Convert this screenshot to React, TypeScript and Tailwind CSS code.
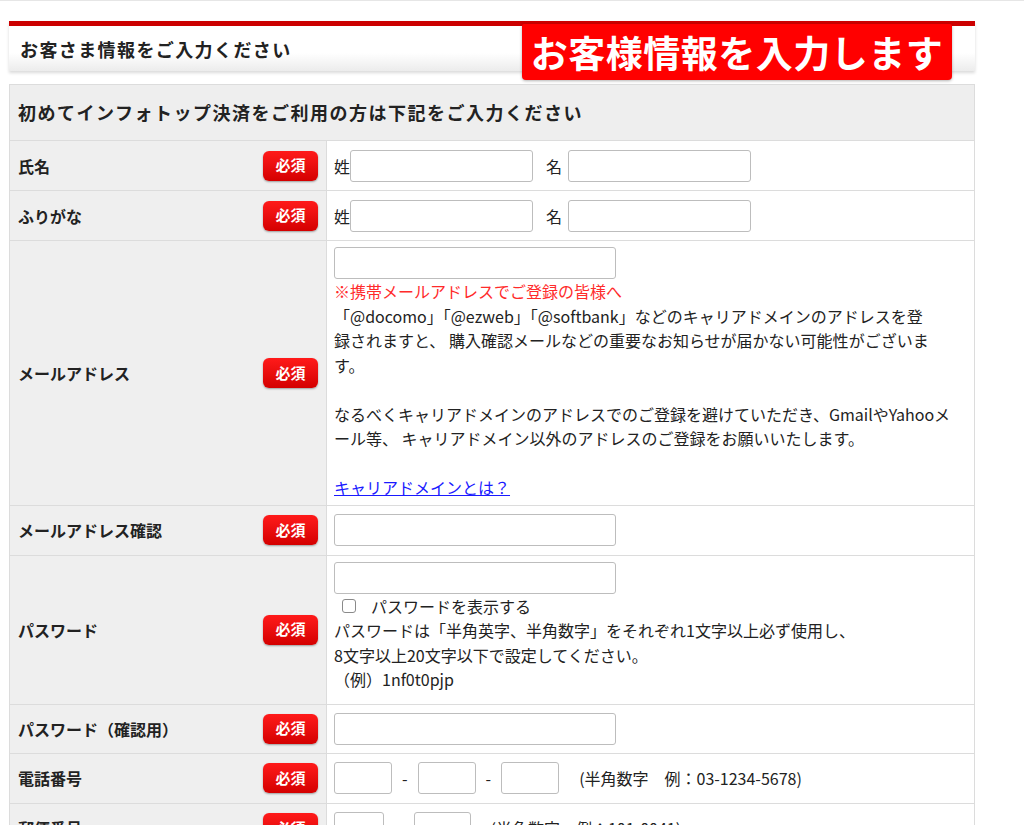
import React from 'react';

const FONT = { fontFamily: '"Noto Sans CJK JP", "Noto Sans", sans-serif' };

function Required() {
  return (
    <span className="inline-flex items-center justify-center w-[55px] h-[30px] rounded-[6px] bg-gradient-to-b from-[#ff1a1a] to-[#d40000] text-white text-[15px] font-bold shadow-[0_1px_2px_rgba(0,0,0,0.35)]">
      必須
    </span>
  );
}

function Field({ w = 'w-[282px]' }: { w?: string }) {
  return <input type="text" className={`${w} h-[32px] border border-[#bdbdbd] rounded-[3px] bg-white`} />;
}

function Row({ label, children, tall = false, h = 'h-[49px]' }: { label: string; children: React.ReactNode; tall?: boolean; h?: string }) {
  return (
    <tr className="border-t border-[#dcdcdc]">
      <td className="bg-[#efefef] w-[317px] pl-[8px] pr-[8px] border-r border-[#dcdcdc] align-middle">
        <div className={`flex items-center justify-between ${tall ? '' : h}`}>
          <span className="text-[16px] font-bold text-[#222]">{label}</span>
          <Required />
        </div>
      </td>
      <td className="pl-[7px] align-middle bg-white">{children}</td>
    </tr>
  );
}

export default function App() {
  return (
    <div className="min-h-[825px] bg-white border-t border-[#e6e6e6] text-[#222]" style={FONT}>
      <div className="relative w-[966px] ml-[9px] pt-[20px]">
        {/* Section heading */}
        <div className="border-t-[5px] border-[#cc0000] bg-gradient-to-b from-white from-60% to-[#ececec] shadow-[0_2px_3px_rgba(0,0,0,0.15)] h-[50px] flex items-center pl-[11px]">
          <h1 className="text-[18px] font-bold leading-none tracking-[1.4px]">お客さま情報をご入力ください</h1>
        </div>

        {/* Annotation label */}
        <div className="absolute left-[513px] top-[23px] w-[430px] h-[56px] bg-[#ff0000] rounded-b-[4px] rounded-t-[2px] shadow-[0_1px_3px_rgba(0,0,0,0.3)] flex items-center justify-center">
          <span className="text-white text-[37px] font-bold leading-none tracking-[0.5px]">お客様情報を入力します</span>
        </div>

        <table className="mt-[13px] w-full border border-[#dcdcdc] border-collapse">
          <tbody>
            <tr>
              <td colSpan={2} className="bg-[#eeeeee] h-[56px] pl-[8px] align-middle">
                <span className="text-[18px] font-bold tracking-[1.5px]">初めてインフォトップ決済をご利用の方は下記をご入力ください</span>
              </td>
            </tr>

            <Row label="氏名">
              <div className="flex items-center text-[16px]">
                <span>姓</span>
                <Field w="w-[183px]" />
                <span className="ml-[13px] mr-[6px]">名</span>
                <Field w="w-[183px]" />
              </div>
            </Row>

            <Row label="ふりがな">
              <div className="flex items-center text-[16px]">
                <span>姓</span>
                <Field w="w-[183px]" />
                <span className="ml-[13px] mr-[6px]">名</span>
                <Field w="w-[183px]" />
              </div>
            </Row>

            <Row label="メールアドレス" tall>
              <div className="pt-[6px] pb-[5px] text-[16px] leading-[24.5px]">
                <Field />
                <p className="text-[#ff2b2b]">※携帯メールアドレスでご登録の皆様へ</p>
                <p>
                  「@docomo」「@ezweb」「@softbank」などのキャリアドメインのアドレスを登
                  <br />
                  録されますと、 購入確認メールなどの重要なお知らせが届かない可能性がございま
                  <br />
                  す。
                </p>
                <p>&nbsp;</p>
                <p>
                  なるべくキャリアドメインのアドレスでのご登録を避けていただき、GmailやYahooメ
                  <br />
                  ール等、 キャリアドメイン以外のアドレスのご登録をお願いいたします。
                </p>
                <p>&nbsp;</p>
                <a href="#" className="text-[#1a1aff] underline">キャリアドメインとは？</a>
              </div>
            </Row>

            <Row label="メールアドレス確認">
              <Field />
            </Row>

            <Row label="パスワード" tall>
              <div className="pt-[6px] pb-[12px] text-[16px] leading-[24.5px]">
                <Field />
                <label className="flex items-center">
                  <span className="ml-[8px] w-[14px] h-[14px] border border-[#8a8a8a] rounded-[3px] bg-white" />
                  <span className="ml-[15px]">パスワードを表示する</span>
                </label>
                <p>パスワードは「半角英字、半角数字」をそれぞれ1文字以上必ず使用し、</p>
                <p>8文字以上20文字以下で設定してください。</p>
                <p>（例）1nf0t0pjp</p>
              </div>
            </Row>

            <Row label="パスワード（確認用）" h="h-[48px]">
              <Field />
            </Row>

            <Row label="電話番号">
              <div className="flex items-center text-[16px]">
                <Field w="w-[58px]" />
                <span className="mx-[10px]">-</span>
                <Field w="w-[58px]" />
                <span className="mx-[10px]">-</span>
                <Field w="w-[58px]" />
                <span className="ml-[20px]">(半角数字　例：03-1234-5678)</span>
              </div>
            </Row>

            <Row label="郵便番号">
              <div className="flex items-center text-[16px]">
                <Field w="w-[50px]" />
                <span className="mx-[12px]">-</span>
                <Field w="w-[57px]" />
                <span className="ml-[20px]">(半角数字　例：101-0041)</span>
              </div>
            </Row>
          </tbody>
        </table>
      </div>
    </div>
  );
}
